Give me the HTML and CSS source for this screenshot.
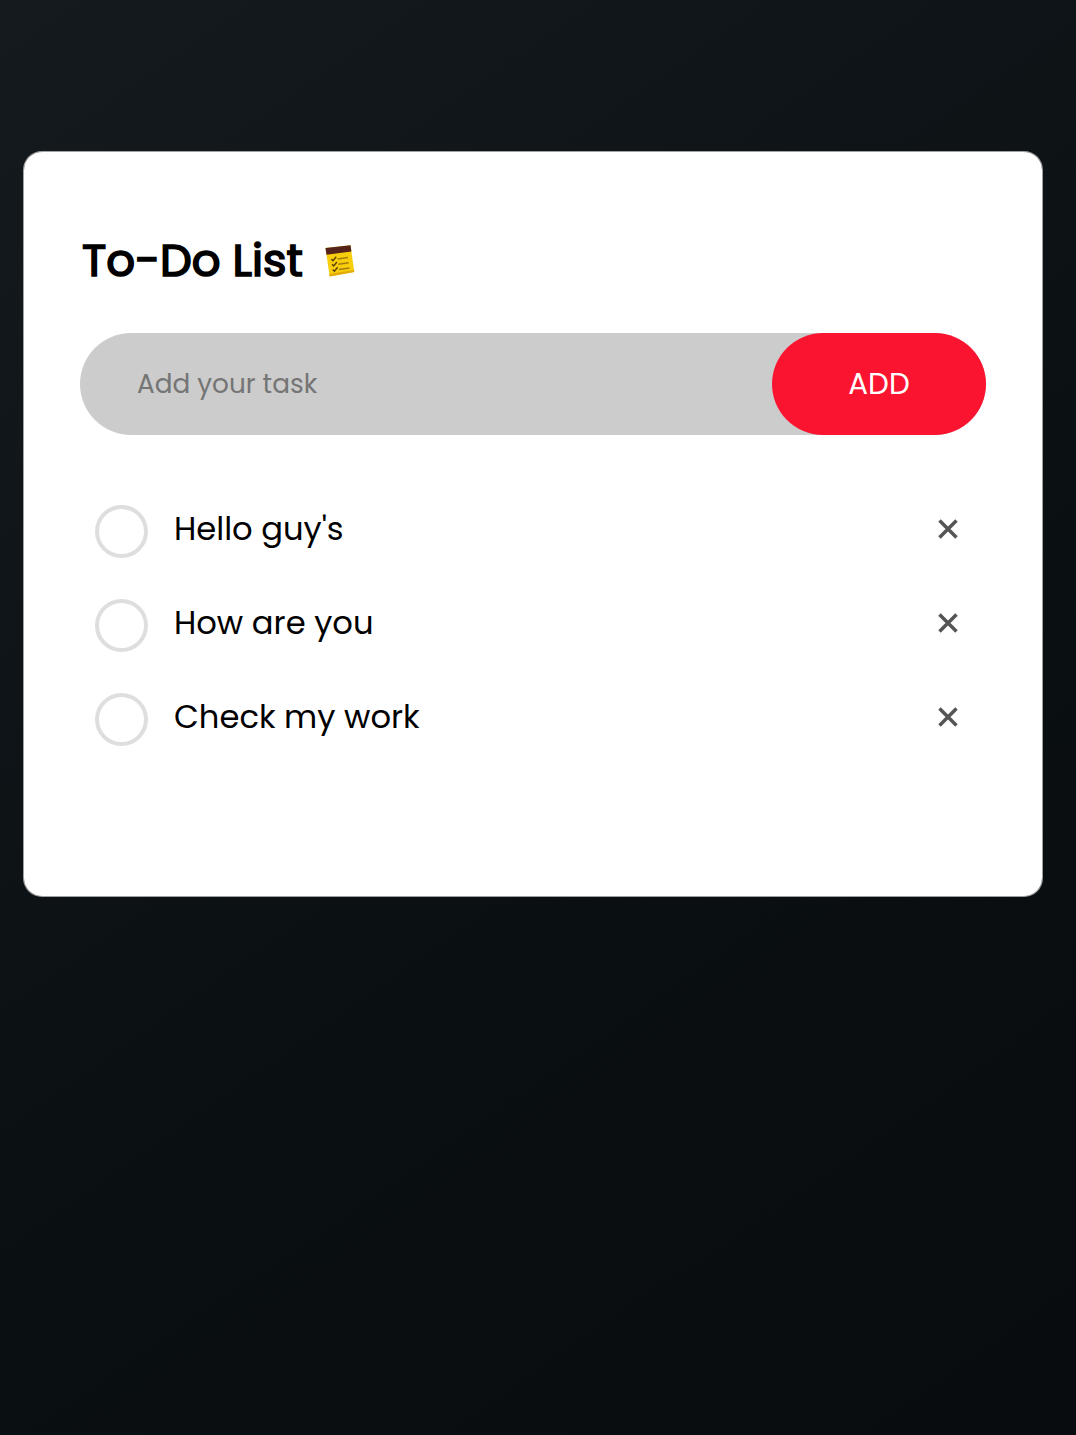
FILE: index.html
```html
<!DOCTYPE html>
<html lang="en">
<head>
<meta charset="utf-8">
<meta name="viewport" content="width=device-width, initial-scale=1">
<title>To-Do List</title>
<link rel="stylesheet" href="styles.css">
</head>
<body>
<main class="todo">
  <h1 class="title"><span class="title-text">To-Do List</span>
    <svg class="note" viewBox="0 0 30 32" aria-hidden="true">
      <path d="M.5 3 25.5.3 29.3 27 4.7 31.5Z" fill="#f7cd0c"/>
      <path d="m4.3 29 24.7-4 .3 2L4.7 31.5Z" fill="#e0ab0b"/>
      <path d="M.5 3 25.5.3l.9 6.2L1.5 9.7Z" fill="#54231a"/>
      <path d="m6.3 14 1.7 1.8 3.2-4M7 19.2 8.7 21l3.2-4M7.7 24.4l1.7 1.8 3.2-4" fill="none" stroke="#5a400b" stroke-width="1.4"/>
      <path d="m12.5 14 10.5-1.4M13.2 19.2l10.5-1.4M14 24.4l10.5-1.4" stroke="#a37c0c" stroke-width="1.5"/>
    </svg>
  </h1>
  <form class="entry">
    <input class="entry-input" type="text" placeholder="Add your task" aria-label="Task">
    <button class="entry-button" type="button">ADD</button>
  </form>
  <ul class="tasks">
    <li class="task"><span class="check"></span><span class="label">Hello guy's</span><svg class="remove" viewBox="0 0 20 20"><path d="m1.5 1.500 17 17M18.500 1.500l-17 17"/></svg></li>
    <li class="task"><span class="check"></span><span class="label">How are you</span><svg class="remove" viewBox="0 0 20 20"><path d="m1.500 1.500 17 17M18.500 1.500l-17 17"/></svg></li>
    <li class="task"><span class="check"></span><span class="label">Check my work</span><svg class="remove" viewBox="0 0 20 20"><path d="m1.500 1.500 17 17M18.500 1.500l-17 17"/></svg></li>
  </ul>
</main>
</body>
</html>
```
FILE: styles.css
```css
* { box-sizing: border-box; margin: 0; padding: 0; }

body {
  min-height: 100vh;
  padding: 151px 33px 0 23px;
  background: linear-gradient(145deg, #141a1e 0%, #0a0f12 60%, #080c0e 100%);
  font-family: Poppins, Inter, sans-serif;
  color: #000;
}

.todo {
  height: 746px;
  padding: 76px 56px 0;
  border: 1px solid rgba(255, 255, 255, 0.6);
  border-radius: 19px;
  background: #fff;
  background-clip: padding-box;
}

.title {
  display: flex;
  align-items: center;
  gap: 22px;
  height: 66px;
  padding-left: 2px;
  font-size: 45px;
  font-weight: 400;
  line-height: 68px;
}

.title-text {
  width: 221px;
  white-space: nowrap;
  -webkit-text-stroke: 1.7px #000;
}

.note { width: 30px; height: 32px; }

.entry {
  display: flex;
  height: 102px;
  margin-top: 39px;
  border-radius: 51px;
  background: #ccc;
}

.entry-input {
  flex: 1;
  min-width: 0;
  padding-left: 57px;
  border: 0;
  outline: 0;
  background: transparent;
  font: inherit;
  font-size: 26.3px;
}

.entry-input::placeholder { color: #757575; }

.entry-button {
  width: 214px;
  border: 0;
  border-radius: 51px;
  background: #fb1430;
  color: #fff;
  font: inherit;
  font-size: 29.4px;
}

.tasks { margin-top: 47px; list-style: none; }

.task {
  display: flex;
  align-items: center;
  height: 94px;
  padding: 0 28px 0 15px;
}

.check {
  width: 53px;
  height: 53px;
  margin-top: 5px;
  border: 4px solid #dedede;
  border-radius: 50%;
}

.label {
  flex: 1;
  margin-left: 26px;
  font-size: 32.2px;
  line-height: 48px;
}

.remove {
  width: 20px;
  height: 20px;
  fill: none;
  stroke: #555;
  stroke-width: 3.5;
}
```
